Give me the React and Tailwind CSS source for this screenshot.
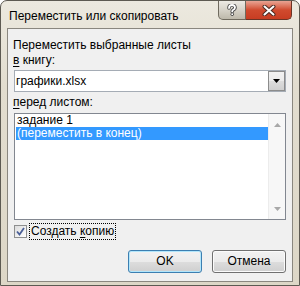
import { useState } from 'react';

const font = { fontFamily: '"Liberation Sans", Arial, sans-serif' };

const CaptionButtons = () => (
  <div className="flex h-[19px] mr-[7px]">
    <div className="w-[28px] h-[19px] border border-[#6f6a5e] border-t-0 rounded-bl-[5px] bg-gradient-to-b from-[#eceae4] via-[#d6d2c8] to-[#bdb8aa] flex items-center justify-center">
      <svg width="10" height="12" viewBox="0 0 10 12">
        <path d="M2 4 Q2 1 5 1 Q8 1 8 3.6 Q8 5.2 6 6 Q5.2 6.4 5.2 7.6" fill="none" stroke="#4a4a4a" strokeWidth="3.6" strokeLinecap="round" />
        <path d="M2 4 Q2 1 5 1 Q8 1 8 3.6 Q8 5.2 6 6 Q5.2 6.4 5.2 7.6" fill="none" stroke="#ffffff" strokeWidth="1.8" strokeLinecap="round" />
        <circle cx="5.2" cy="10.2" r="1.7" fill="#4a4a4a" />
        <circle cx="5.2" cy="10.2" r="0.9" fill="#ffffff" />
      </svg>
    </div>
    <div className="w-[46px] h-[19px] border border-[#6b3426] border-t-0 border-l-0 rounded-br-[5px] bg-gradient-to-b from-[#e8a393] via-[#d04a2e] to-[#c83d22] flex items-center justify-center">
      <svg width="14" height="11" viewBox="0 0 14 11">
        <path d="M2.5 1.5 L11.5 9.5 M11.5 1.5 L2.5 9.5" stroke="#4b2a22" strokeWidth="4" strokeLinecap="round" />
        <path d="M2.5 1.5 L11.5 9.5 M11.5 1.5 L2.5 9.5" stroke="#ffffff" strokeWidth="2" strokeLinecap="round" />
      </svg>
    </div>
  </div>
);

const Win7Button = ({ label, isDefault }) => (
  <button
    className={`w-[74px] h-[23px] rounded-[3px] border text-[12px] text-black flex items-center justify-center ${
      isDefault
        ? 'border-[#3c7fb1] shadow-[inset_0_0_0_1px_#b2e6fb]'
        : 'border-[#707070] shadow-[inset_0_0_0_1px_#fbfbfb]'
    } bg-[linear-gradient(to_bottom,#f2f2f2_0%,#ebebeb_50%,#dddddd_51%,#cfcfcf_100%)]`}
    style={font}
  >
    {label}
  </button>
);

export default function App() {
  const [copy, setCopy] = useState(true);
  const [selected, setSelected] = useState(1);
  const sheets = ['задание 1', '(переместить в конец)'];

  return (
    <div
      className="w-[300px] h-[286px] flex flex-col rounded-t-[7px] border border-[#5d5a52] bg-[linear-gradient(to_bottom,#ece9df_0%,#e2ddcf_30%,#ddd7c7_100%)] overflow-hidden"
      style={font}
    >
      {/* Title bar */}
      <div className="h-[27px] flex justify-between items-start shrink-0">
        <div className="pl-[8px] pt-[8px] text-[12px] text-black leading-[14px]">Переместить или скопировать</div>
        <CaptionButtons />
      </div>

      {/* Client area */}
      <div className="mx-[6px] border border-[#8a877f] bg-[#f0f0f0] flex flex-col pl-[5px] pr-[6px] pt-[9px] pb-[8px] text-[12px] leading-[15px] text-black">
        <div>Переместить выбранные листы</div>
        <div>
          <span className="underline underline-offset-2">в</span> книгу:
        </div>

        {/* Combobox */}
        <div className="mt-[2px] ml-[1px] h-[22px] bg-white border border-[#a5acb5] flex items-center">
          <div className="flex-1 pl-[1px]">графики.xlsx</div>
          <div className="w-[17px] h-[20px] border border-[#8c8c8c] bg-[linear-gradient(to_bottom,#f2f2f2_0%,#ebebeb_50%,#dddddd_51%,#cfcfcf_100%)] flex items-center justify-center">
            <svg width="7" height="4" viewBox="0 0 7 4">
              <path d="M0 0 L7 0 L3.5 4 Z" fill="#000" />
            </svg>
          </div>
        </div>

        <div className="mt-[3px]">
          <span className="underline underline-offset-2">п</span>еред листом:
        </div>

        {/* Listbox */}
        <div className="mt-[3px] ml-[1px] h-[107px] bg-white border border-[#828790] flex">
          <div className="flex-1 pl-[1px]">
            {sheets.map((s, i) => (
              <div
                key={s}
                onClick={() => setSelected(i)}
                className={`h-[13px] leading-[13px] pl-[1px] ${
                  selected === i ? 'bg-[#3399ff] text-white' : 'text-black'
                }`}
              >
                {s}
              </div>
            ))}
          </div>
          <div className="w-[17px] border-l border-[#ececec] bg-[#f7f7f7] flex flex-col justify-between items-center pt-[9px] pb-[8px]">
            <svg width="7" height="4" viewBox="0 0 7 4">
              <path d="M0 4 L7 4 L3.5 0 Z" fill="#a8a8a8" />
            </svg>
            <svg width="7" height="4" viewBox="0 0 7 4">
              <path d="M0 0 L7 0 L3.5 4 Z" fill="#a8a8a8" />
            </svg>
          </div>
        </div>

        {/* Checkbox */}
        <div className="mt-[3px] ml-[1px] h-[17px] flex items-center">
          <button
            onClick={() => setCopy(!copy)}
            className="w-[13px] h-[13px] border border-[#8e8f8f] bg-[linear-gradient(to_bottom_right,#dcdcdc,#ffffff)] flex items-center justify-center mr-[2px]"
          >
            {copy && (
              <svg width="9" height="9" viewBox="0 0 9 9">
                <path d="M1 4.5 L3.5 7.5 L8 1" fill="none" stroke="#4a5f97" strokeWidth="1.8" />
              </svg>
            )}
          </button>
          <div className="h-[17px] px-[1px] border border-dotted border-black leading-[15px]">
            Создать <span className="underline underline-offset-2">к</span>опию
          </div>
        </div>

        {/* Buttons */}
        <div className="mt-[10px] flex justify-end gap-[10px]">
          <Win7Button label="OK" isDefault />
          <Win7Button label="Отмена" />
        </div>
      </div>
    </div>
  );
}
